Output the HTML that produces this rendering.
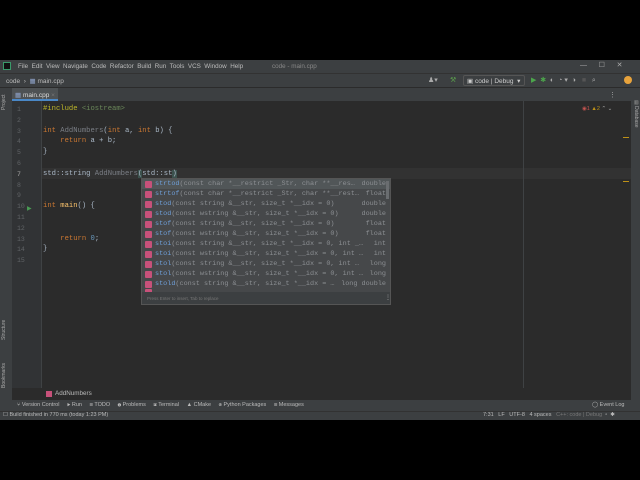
<!DOCTYPE html>
<html><head><meta charset="utf-8"><style>
*{margin:0;padding:0;box-sizing:border-box}
body{width:640px;height:480px;background:#000;position:relative;overflow:hidden;font-family:"Liberation Sans",sans-serif;color:#bbb;font-size:6px}
.a{position:absolute;white-space:pre}
.m{font-family:"Liberation Mono",monospace;font-size:7.2px}
.ln{color:#606366;font-family:"Liberation Mono",monospace;font-size:6.5px}
.k{color:#cc7832}.f{color:#7a7e85}.n{color:#6897bb}.s{color:#6a8759}.p{color:#a9b7c6}.mc{color:#ffc66d}
.row{position:absolute;left:0;width:250px;height:10px;font-family:"Liberation Mono",monospace;font-size:6.8px;color:#8c8f93}
.row b{position:absolute;left:3px;top:1.5px;width:7px;height:7px;background:#c7517a;border-radius:1px}
.row i{font-style:normal;position:absolute;left:13px;top:1px;color:#6f9fd8}
.row u{text-decoration:none;position:absolute;right:6px;top:1px;color:#8c8f93}
</style></head><body>
<div class="a" style="left:0;top:60px;width:640px;height:13px;background:#3c3f41"></div>
<div class="a" style="left:3px;top:62px;width:8px;height:8px;background:#111;border:1px solid #3a9a6a"></div>
<div class="a" style="left:18px;top:63px;font-size:6.3px;color:#bbb">File  Edit  View  Navigate  Code  Refactor  Build  Run  Tools  VCS  Window  Help</div>
<div class="a" style="left:272px;top:63px;font-size:6.3px;color:#888">code - main.cpp</div>
<div class="a" style="left:580px;top:61px;font-size:7px;color:#aaa">—      ☐      ✕</div>
<div class="a" style="left:0;top:73px;width:640px;height:15px;background:#3c3f41;border-top:1px solid #323232;border-bottom:1px solid #2b2b2b"></div>
<div class="a" style="left:6px;top:77px;font-size:6.5px">code  ›  <span style="color:#8fa3c9">▦</span> main.cpp</div>
<div class="a" style="left:428px;top:76px;font-size:7px;color:#aaa">♟▾</div>
<div class="a" style="left:450px;top:76px;font-size:7px;color:#5a9e4c">⚒</div>
<div class="a" style="left:463px;top:75px;width:62px;height:11px;border:1px solid #555;border-radius:2px;background:#3c3f41"></div>
<div class="a" style="left:467px;top:77px;font-size:6.5px;color:#ccc">▣ code | Debug  ▾</div>
<div class="a" style="left:531px;top:76px;font-size:7px;color:#4ca64c">▶  <span style="color:#4ca64c">✱</span>  <span style="color:#aaa">◐  ◔ ▾  ◑   <span style="color:#555">■</span>   ⌕</span></div>
<div class="a" style="left:624px;top:76px;width:8px;height:8px;border-radius:50%;background:#e8a33c"></div>
<div class="a" style="left:0;top:88px;width:640px;height:13px;background:#3c3f41"></div>
<div class="a" style="left:12px;top:88px;width:46px;height:13px;background:#4e5254;border-bottom:2px solid #4a88c7"></div>
<div class="a" style="left:15px;top:91px;font-size:6.5px;color:#ddd"><span style="color:#8fa3c9">▦</span> main.cpp <span style="color:#777">×</span></div>
<div class="a" style="left:609px;top:91px;font-size:7px;color:#aaa">⋮</div>
<div class="a" style="left:0;top:88px;width:12px;height:312px;background:#3c3f41"></div>
<div class="a" style="left:1px;top:110px;font-size:5px;color:#aaa;transform:rotate(-90deg);transform-origin:0 0">Project</div>
<div class="a" style="left:1px;top:340px;font-size:5px;color:#aaa;transform:rotate(-90deg);transform-origin:0 0">Structure</div>
<div class="a" style="left:1px;top:388px;font-size:5px;color:#aaa;transform:rotate(-90deg);transform-origin:0 0">Bookmarks</div>
<div class="a" style="left:631px;top:101px;width:9px;height:299px;background:#3c3f41"></div>
<div class="a" style="left:639px;top:100px;font-size:5px;color:#aaa;transform:rotate(90deg);transform-origin:0 0">▤ Database</div>
<div class="a" style="left:12px;top:101px;width:619px;height:287px;background:#2b2b2b"></div>
<div class="a" style="left:12px;top:101px;width:29px;height:299px;background:#313335"></div>
<div class="a" style="left:41px;top:101px;width:1px;height:299px;background:#3f4244"></div>
<div class="a" style="left:42px;top:168px;width:589px;height:11px;background:#323232"></div>
<div class="a" style="left:523px;top:101px;width:1px;height:287px;background:#3f4244"></div>
<div class="a" style="left:582px;top:106px;font-size:5.5px;color:#c75450">◉1 <span style="color:#be9117">▲2</span> <span style="color:#aaa">⌃ ⌄</span></div>
<div class="a" style="left:623px;top:137px;width:6px;height:1px;background:#be9117"></div>
<div class="a" style="left:623px;top:181px;width:6px;height:1px;background:#be9117"></div>
<div class="a ln" style="left:17px;top:105px;line-height:10.8px">1
2
3
4
5
6
<span style="color:#a4a3a3">7</span>
8
9
10
11
12
13
14
15</div>
<div class="a" style="left:27px;top:205px;font-size:6px;color:#499c54">▶</div>
<div class="a m p" style="left:43px;top:104px;line-height:10.8px"><span style="color:#bbb529">#include</span> <span class="s">&lt;iostream&gt;</span>

<span class="k">int</span> <span class="f">AddNumbers</span>(<span class="k">int</span> a, <span class="k">int</span> b) {
    <span class="k">return</span> a + b;
}

std::string <span class="f">AddNumbers</span><span style="background:#3b514d">(</span>std::st<span style="background:#3b514d">)</span>


<span class="k">int</span> <span class="mc">main</span>() {


    <span class="k">return</span> <span class="n">0</span>;
}</div>
<div class="a" style="left:141px;top:178px;width:250px;height:127px;background:#46484a;border:1px solid #555;overflow:hidden">
<div class="a" style="left:0;top:0;width:248px;height:10px;background:#515658"></div>
<div class="a" style="left:244px;top:2px;width:3px;height:18px;background:#6a6d70"></div>
<div class="row" style="top:0"><b></b><i>strtod<span style="color:#8c8f93">(const char *__restrict _Str, char **__res…</span></i><u>double</u></div>
<div class="row" style="top:10px"><b></b><i>strtof<span style="color:#8c8f93">(const char *__restrict _Str, char **__rest…</span></i><u>float</u></div>
<div class="row" style="top:20px"><b></b><i>stod<span style="color:#8c8f93">(const string &amp;__str, size_t *__idx = 0)</span></i><u>double</u></div>
<div class="row" style="top:30px"><b></b><i>stod<span style="color:#8c8f93">(const wstring &amp;__str, size_t *__idx = 0)</span></i><u>double</u></div>
<div class="row" style="top:40px"><b></b><i>stof<span style="color:#8c8f93">(const string &amp;__str, size_t *__idx = 0)</span></i><u>float</u></div>
<div class="row" style="top:50px"><b></b><i>stof<span style="color:#8c8f93">(const wstring &amp;__str, size_t *__idx = 0)</span></i><u>float</u></div>
<div class="row" style="top:60px"><b></b><i>stoi<span style="color:#8c8f93">(const string &amp;__str, size_t *__idx = 0, int _…</span></i><u>int</u></div>
<div class="row" style="top:70px"><b></b><i>stoi<span style="color:#8c8f93">(const wstring &amp;__str, size_t *__idx = 0, int …</span></i><u>int</u></div>
<div class="row" style="top:80px"><b></b><i>stol<span style="color:#8c8f93">(const string &amp;__str, size_t *__idx = 0, int …</span></i><u>long</u></div>
<div class="row" style="top:90px"><b></b><i>stol<span style="color:#8c8f93">(const wstring &amp;__str, size_t *__idx = 0, int …</span></i><u>long</u></div>
<div class="row" style="top:100px"><b></b><i>stold<span style="color:#8c8f93">(const string &amp;__str, size_t *__idx = …</span></i><u>long double</u></div>
<div class="row" style="top:108px;height:5px;overflow:hidden"><b></b></div>
<div class="a" style="left:0;top:113px;width:248px;height:13px;background:#3c3f41"></div>
<div class="a" style="left:5px;top:117px;font-size:4.5px;color:#777">Press Enter to insert, Tab to replace</div>
<div class="a" style="left:243px;top:115px;font-size:6px;color:#aaa">⋮</div>
</div>
<div class="a" style="left:12px;top:388px;width:619px;height:12px;background:#2b2b2b"></div>
<div class="a" style="left:46px;top:391px;width:6px;height:6px;background:#c7517a"></div>
<div class="a" style="left:55px;top:390px;font-size:6.3px;color:#bbb">AddNumbers</div>
<div class="a" style="left:0;top:400px;width:640px;height:11px;background:#3c3f41"></div>
<div class="a" style="left:17px;top:402px;font-size:5.5px;color:#bbb">⑂ Version Control     ▶ Run     ☰ TODO     ❶ Problems     ▣ Terminal     ▲ CMake     ⊛ Python Packages     ☰ Messages</div>
<div class="a" style="left:592px;top:402px;font-size:5.5px;color:#bbb">◯ Event Log</div>
<div class="a" style="left:0;top:411px;width:640px;height:9px;background:#3c3f41;border-top:1px solid #323232"></div>
<div class="a" style="left:3px;top:412px;font-size:5.5px;color:#bbb">☐ Build finished in 770 ms (today 1:23 PM)</div>
<div class="a" style="left:483px;top:412px;font-size:5.5px;color:#bbb">7:31   LF   UTF-8   4 spaces   <span style="color:#777">C++: code | Debug</span>  ▫  ✱</div>
</body></html>
